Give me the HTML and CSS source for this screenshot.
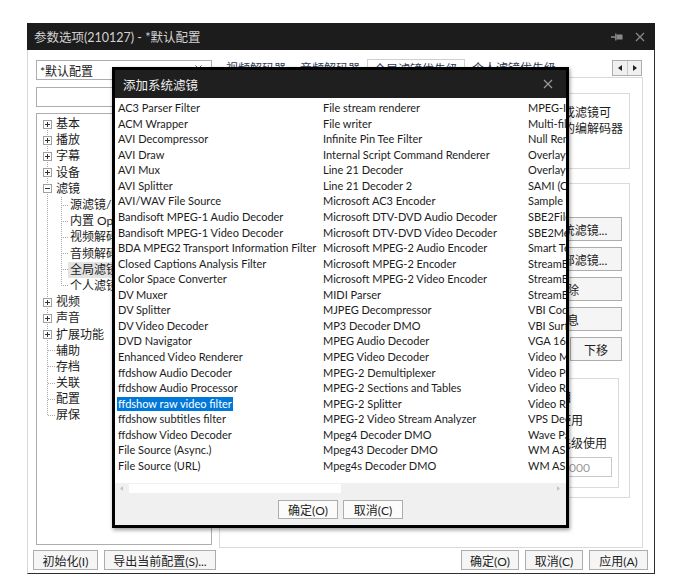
FILE: index.html
```html
<!DOCTYPE html>
<html lang="zh-CN">
<head>
<meta charset="utf-8">
<title>参数选项</title>
<link rel="stylesheet" href="styles.css">
</head>
<body>
<div class="win">
  <div class="titlebar">
    <span class="title">参数选项(210127) - *默认配置</span>
    <span class="tb-icons">
      <svg width="12" height="10" viewBox="0 0 12 10"><path d="M0 5h4.5M4.8 1.5v7" stroke="#8a8a8a" stroke-width="1.3" fill="none"/><rect x="5.5" y="2.5" width="6" height="5" fill="#8a8a8a"/></svg>
      <svg width="10" height="10" viewBox="0 0 10 10"><path d="M1 1l8 8M9 1l-8 8" stroke="#8a8a8a" stroke-width="1.3" fill="none"/></svg>
    </span>
  </div>
  <div class="wbody">
    <div class="main">
      <div class="left">
        <div class="combo"><span>*默认配置</span><svg class="chev" width="7" height="5" viewBox="0 0 7 5"><path d="M0.5 0.5l3 3 3-3" stroke="#555" fill="none"/></svg></div>
        <div class="search"></div>
        <div class="tree">
          <div class="node"><span class="tg"><span class="box plus"></span></span><span class="lbl">基本</span></div>
          <div class="node"><span class="tg"><span class="box plus"></span></span><span class="lbl">播放</span></div>
          <div class="node"><span class="tg"><span class="box plus"></span></span><span class="lbl">字幕</span></div>
          <div class="node"><span class="tg"><span class="box plus"></span></span><span class="lbl">设备</span></div>
          <div class="node"><span class="tg"><span class="box minus"></span></span><span class="lbl">滤镜</span></div>
          <div class="kids">
            <div class="node kid"><span class="tg2"></span><span class="lbl">源滤镜/分离器</span></div>
            <div class="node kid"><span class="tg2"></span><span class="lbl">内置 Open 解码器</span></div>
            <div class="node kid"><span class="tg2"></span><span class="lbl">视频解码器</span></div>
            <div class="node kid"><span class="tg2"></span><span class="lbl">音频解码器</span></div>
            <div class="node kid"><span class="tg2"></span><span class="lbl cur">全局滤镜优先级</span></div>
            <div class="node kid"><span class="tg2"></span><span class="lbl">个人滤镜优先级</span></div>
          </div>
          <div class="node"><span class="tg"><span class="box plus"></span></span><span class="lbl">视频</span></div>
          <div class="node"><span class="tg"><span class="box plus"></span></span><span class="lbl">声音</span></div>
          <div class="node"><span class="tg"><span class="box plus"></span></span><span class="lbl">扩展功能</span></div>
          <div class="node"><span class="tg leaf"></span><span class="lbl">辅助</span></div>
          <div class="node"><span class="tg leaf"></span><span class="lbl">存档</span></div>
          <div class="node"><span class="tg leaf"></span><span class="lbl">关联</span></div>
          <div class="node"><span class="tg leaf"></span><span class="lbl">配置</span></div>
          <div class="node"><span class="tg leaf"></span><span class="lbl">屏保</span></div>
        </div>
      </div>
      <div class="right">
        <div class="tabs">
          <span class="tab">视频解码器</span>
          <span class="tab">音频解码器</span>
          <span class="tab active">全局滤镜优先级</span>
          <span class="tab">个人滤镜优先级</span>
          <span class="tab-arrows">
            <span class="arr"><svg width="4" height="6" viewBox="0 0 4 6"><path d="M4 0v6L0 3z" fill="#222"/></svg></span>
            <span class="arr"><svg width="4" height="6" viewBox="0 0 4 6"><path d="M0 0v6l4-3z" fill="#222"/></svg></span>
          </span>
        </div>
        <div class="panel">
          <div class="group g1">
            <div class="ln l1">在这里设定的优先级对全局有效，系统滤镜或滤镜可</div>
            <div class="ln l2">以替换播放器内置的编解码器</div>
          </div>
          <div class="group g2">
            <div class="btncol">
              <span class="btn wide">添加系统滤镜...</span>
              <span class="btn wide">添加外部滤镜...</span>
              <span class="btn wide">删除</span>
              <span class="btn wide">信息</span>
              <div class="btnrow">
                <span class="btn half">上移</span>
                <span class="btn half">下移</span>
              </div>
            </div>
            <div class="group g3">
              <div class="ln m1">优先使用的项目</div>
              <div class="ln m2">禁止使用</div>
              <div class="ln m3">按优先级使用</div>
              <div class="num">3000</div>
            </div>
          </div>
        </div>
      </div>
    </div>
    <div class="footer">
      <span class="btn f1">初始化(I)</span>
      <span class="btn f2">导出当前配置(S)...</span>
      <span class="btn f3 push">确定(O)</span>
      <span class="btn f3">取消(C)</span>
      <span class="btn f4">应用(A)</span>
    </div>
  </div>
</div>

<div class="dialog">
  <div class="dlg-title">
    <span class="dlg-name">添加系统滤镜</span>
    <svg width="10" height="10" viewBox="0 0 10 10"><path d="M1 1l8 8M9 1l-8 8" stroke="#9a9a9a" stroke-width="1.2" fill="none"/></svg>
  </div>
  <div class="list">
    <div class="grid">
      <span>AC3 Parser Filter</span>
      <span>ACM Wrapper</span>
      <span>AVI Decompressor</span>
      <span>AVI Draw</span>
      <span>AVI Mux</span>
      <span>AVI Splitter</span>
      <span>AVI/WAV File Source</span>
      <span>Bandisoft MPEG-1 Audio Decoder</span>
      <span>Bandisoft MPEG-1 Video Decoder</span>
      <span>BDA MPEG2 Transport Information Filter</span>
      <span>Closed Captions Analysis Filter</span>
      <span>Color Space Converter</span>
      <span>DV Muxer</span>
      <span>DV Splitter</span>
      <span>DV Video Decoder</span>
      <span>DVD Navigator</span>
      <span>Enhanced Video Renderer</span>
      <span>ffdshow Audio Decoder</span>
      <span>ffdshow Audio Processor</span>
      <span><em class="sel">ffdshow raw video filter</em></span>
      <span>ffdshow subtitles filter</span>
      <span>ffdshow Video Decoder</span>
      <span>File Source (Async.)</span>
      <span>File Source (URL)</span>
      <span>File stream renderer</span>
      <span>File writer</span>
      <span>Infinite Pin Tee Filter</span>
      <span>Internal Script Command Renderer</span>
      <span>Line 21 Decoder</span>
      <span>Line 21 Decoder 2</span>
      <span>Microsoft AC3 Encoder</span>
      <span>Microsoft DTV-DVD Audio Decoder</span>
      <span>Microsoft DTV-DVD Video Decoder</span>
      <span>Microsoft MPEG-2 Audio Encoder</span>
      <span>Microsoft MPEG-2 Encoder</span>
      <span>Microsoft MPEG-2 Video Encoder</span>
      <span>MIDI Parser</span>
      <span>MJPEG Decompressor</span>
      <span>MP3 Decoder DMO</span>
      <span>MPEG Audio Decoder</span>
      <span>MPEG Video Decoder</span>
      <span>MPEG-2 Demultiplexer</span>
      <span>MPEG-2 Sections and Tables</span>
      <span>MPEG-2 Splitter</span>
      <span>MPEG-2 Video Stream Analyzer</span>
      <span>Mpeg4 Decoder DMO</span>
      <span>Mpeg43 Decoder DMO</span>
      <span>Mpeg4s Decoder DMO</span>
      <span>MPEG-I Stream Splitter</span>
      <span>Multi-file Parser</span>
      <span>Null Renderer</span>
      <span>Overlay Mixer</span>
      <span>Overlay Mixer2</span>
      <span>SAMI (CC) Parser</span>
      <span>Sample Grabber</span>
      <span>SBE2FileScan</span>
      <span>SBE2MediaTypeProfile</span>
      <span>Smart Tee</span>
      <span>StreamBufferSink</span>
      <span>StreamBufferSink2</span>
      <span>StreamBufferSource</span>
      <span>VBI Codec</span>
      <span>VBI Surface Allocator</span>
      <span>VGA 16 Color Ditherer</span>
      <span>Video Mixing Renderer 9</span>
      <span>Video Port Manager</span>
      <span>Video Renderer</span>
      <span>Video Renderer</span>
      <span>VPS Decoder</span>
      <span>Wave Parser</span>
      <span>WM ASF Reader</span>
      <span>WM ASF Writer</span>
    </div>
  </div>
  <div class="hscroll">
    <svg class="sarr" width="3" height="5" viewBox="0 0 3 5"><path d="M3 0v5L0 2.5z" fill="#c2c2c2"/></svg>
    <span class="thumb"></span>
    <span class="track"></span>
    <svg class="sarr" width="3" height="5" viewBox="0 0 3 5"><path d="M0 0v5l3-2.5z" fill="#c2c2c2"/></svg>
  </div>
  <div class="btnbar">
    <span class="btn dbtn">确定(O)</span>
    <span class="btn dbtn">取消(C)</span>
  </div>
</div>
</body>
</html>
```
FILE: styles.css
```css
* { box-sizing: border-box; }
body {
  margin: 0;
  background: #fff;
  font-family: "Lato", "Noto Sans CJK SC", sans-serif;
  color: #1c1c1c;
}
.win {
  margin: 23px 0 0 27px;
  width: 628px;
  height: 551px;
  display: flex;
  flex-direction: column;
}
.titlebar {
  height: 27px;
  flex: none;
  background: #1c1c1c;
  color: #d2d2d2;
  font-size: 12.5px;
  display: flex;
  align-items: center;
  padding: 0 10px 0 7px;
}
.title { flex: 1; }
.tb-icons { display: flex; align-items: center; gap: 12px; }
.tb-icons svg { display: block; }

.wbody {
  flex: 1;
  background: #fff;
  border-left: 1px solid #d8d8d8;
  border-right: 1px solid #2e2e2e;
  border-bottom: 1px solid #2e2e2e;
  display: flex;
  flex-direction: column;
}
.main { display: flex; height: 498px; flex: none; }
.left {
  width: 176px;
  margin-left: 8px;
  padding-top: 10px;
  display: flex;
  flex-direction: column;
}
.combo {
  height: 20px;
  border: 1px solid #adadad;
  font-size: 12px;
  display: flex;
  align-items: center;
  padding: 0 9px 0 3px;
}
.combo span { flex: 1; }
.chev { align-self: flex-start; margin-top: 4px; }
.search { height: 20px; margin-top: 7px; border: 1px solid #adadad; }
.tree {
  height: 432px;
  margin-top: 6px;
  border: 1px solid #adadad;
  padding-top: 2px;
  font-size: 12px;
  background: repeating-linear-gradient(to bottom, #a8a8a8 0 1px, transparent 1px 2px) 10px 10px / 1px 292px no-repeat;
}
.node { display: flex; align-items: center; height: 16.2px; }
.tg { width: 19px; flex: none; height: 100%; display: flex; align-items: center; }
.tg.leaf {
  background: repeating-linear-gradient(to right, #a8a8a8 0 1px, transparent 1px 2px) 11px 50% / 7px 1px no-repeat;
}
.box {
  margin-left: 6px;
  width: 9px;
  height: 9px;
  border: 1px solid #a0a0a0;
  background: #fff;
}
.box.plus {
  background: linear-gradient(#333, #333) center / 5px 1px no-repeat,
              linear-gradient(#333, #333) center / 1px 5px no-repeat, #fff;
}
.box.minus {
  background: linear-gradient(#333, #333) center / 5px 1px no-repeat, #fff;
}
.kids {
  background: repeating-linear-gradient(to bottom, #a8a8a8 0 1px, transparent 1px 2px) 24px 0 / 1px 89px no-repeat;
}
.kid { padding-left: 19px; }
.tg2 {
  width: 14px;
  flex: none;
  height: 100%;
  background: repeating-linear-gradient(to right, #a8a8a8 0 1px, transparent 1px 2px) 5px 50% / 8px 1px no-repeat;
}
.lbl { white-space: nowrap; line-height: 16px; }
.lbl.cur { background: #e3e3e3; padding: 0 2px; margin-left: -2px; }

.right { width: 424px; margin-left: 7px; padding-top: 8px; display: flex; flex-direction: column; }
.tabs { height: 19px; display: flex; align-items: stretch; font-size: 12px; color: #2d3a55; }
.tab { padding: 0 7px; display: flex; align-items: center; white-space: nowrap; }
.tab.active { border: 1px solid #cfcfcf; border-bottom: none; background: #fff; margin-top: 1px; padding: 0 6px; }
.tab-arrows {
  margin-left: auto;
  margin-right: 1px;
  margin-top: 2px;
  height: 16px;
  display: flex;
  border: 1px solid #adadad;
  background: #f0f0f0;
}
.arr { width: 14px; display: flex; align-items: center; justify-content: center; }
.arr + .arr { border-left: 1px solid #c8c8c8; }

.panel {
  height: 471px;
  border: 1px solid #dadada;
  padding: 15px 12px 0 12px;
  font-size: 12px;
}
.group { border: 1px solid #dadada; }
.g1 { height: 76px; padding-top: 11px; }
.ln { line-height: 16px; text-align: right; white-space: nowrap; }
.l1 { padding-right: 18px; }
.l2 { padding-right: 6px; }
.g2 { height: 315px; margin-top: 14px; padding: 33px 7px 0 0; }
.btncol { display: flex; flex-direction: column; align-items: flex-end; gap: 6px; }
.btnrow { display: flex; gap: 6px; }
.btn {
  height: 20px;
  border: 1px solid #adadad;
  background: #f5f5f5;
  font-size: 12px;
  color: #222;
  display: flex;
  align-items: center;
  justify-content: center;
  white-space: nowrap;
}
.btn.wide { width: 110px; height: 24px; }
.btn.half { width: 52px; height: 24px; }
.g3 { height: 110px; margin: 17px 3px 0 0; padding: 7px 6px 0 0; }
.g3 .ln { line-height: 23px; }
.m1 { padding-right: 40px; }
.m2 { padding-right: 29px; }
.m3 { padding-right: 5px; }
.num {
  margin: 2px 0 0 auto;
  width: 54px;
  height: 20px;
  border: 1px solid #c8c8c8;
  color: #9a9a9a;
  padding-left: 3px;
  display: flex;
  align-items: center;
}

.footer { display: flex; gap: 6px; padding: 2px 6px 0 5px; }
.f1 { width: 65px; }
.f2 { width: 112px; }
.f3 { width: 58px; }
.f4 { width: 59px; }
.push { margin-left: auto; }

.dialog {
  position: absolute;
  left: 112px;
  top: 67px;
  width: 457px;
  height: 461px;
  border: 3px solid #000;
  background: #f0f0f0;
  box-shadow: 1px 2px 4px rgba(0, 0, 0, 0.4);
  display: flex;
  flex-direction: column;
}
.dlg-title {
  height: 28px;
  flex: none;
  background: #1f1f1f;
  color: #f0f0f0;
  font-size: 12.5px;
  display: flex;
  align-items: center;
  padding: 0 13px 0 8px;
}
.dlg-name { flex: 1; }
.list {
  height: 385px;
  flex: none;
  background: #fff;
  overflow: hidden;
  padding: 2px 0 0 3px;
}
.grid {
  display: grid;
  grid-auto-flow: column;
  grid-template-columns: repeat(3, 205px);
  grid-template-rows: repeat(24, 15.565px);
  font-size: 11px;
  line-height: 15.565px;
  color: #1c1c1c;
  width: 615px;
}
.grid span { white-space: nowrap; }
.sel {
  font-style: normal;
  display: inline-block;
  background: #0078d7;
  color: #fff;
  line-height: 14px;
  padding: 0 1px;
  margin-left: -1px;
}
.hscroll {
  height: 11px;
  flex: none;
  background: #f0f0f0;
  display: flex;
  align-items: center;
  padding: 0 6px 0 5px;
}
.sarr { flex: none; }
.thumb { width: 212px; height: 9px; background: #fff; margin-left: 6px; }
.track { flex: 1; }
.btnbar { flex: 1; display: flex; justify-content: center; align-items: center; gap: 5px; }
.dbtn { width: 60px; height: 19px; background: #fbfbfb; }
```
